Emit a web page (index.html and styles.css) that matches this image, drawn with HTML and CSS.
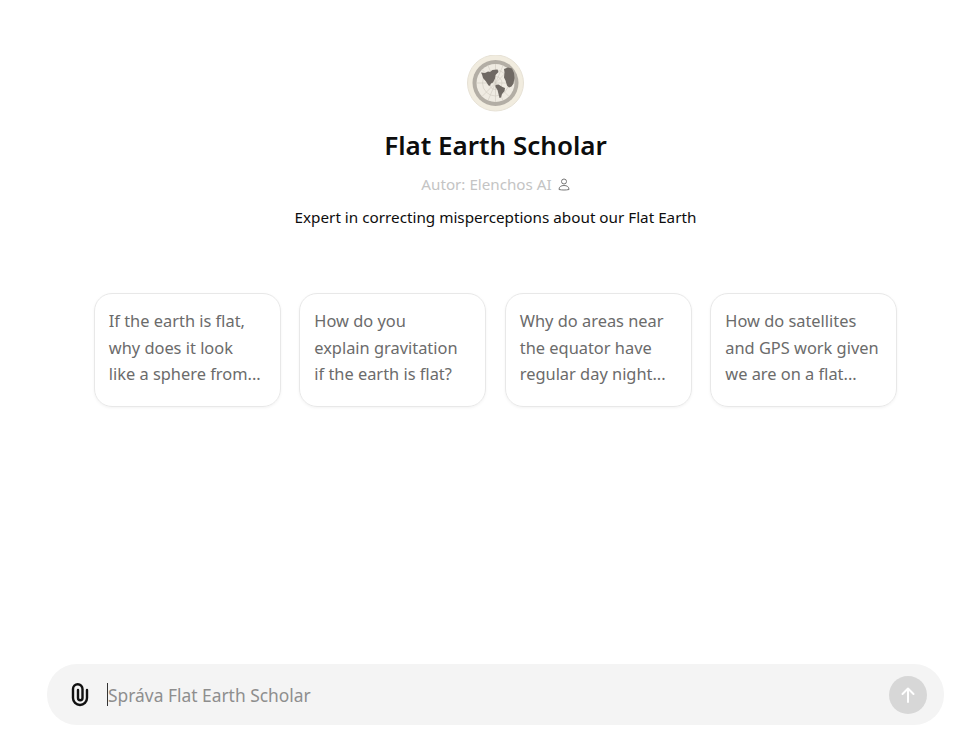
FILE: index.html
```html
<!DOCTYPE html>
<html lang="sk">

<head>
    <meta charset="UTF-8">
    <meta name="viewport" content="width=device-width, initial-scale=1.0">
    <title>Flat Earth Scholar</title>
    <link rel="stylesheet" href="styles.css">
</head>

<body>
    <div class="page">
        <!-- Header -->
        <div class="intro">
            <svg class="avatar" width="57" height="57" viewBox="0 0 57 57">
                <circle cx="28.500" cy="28" r="28" fill="#f1ecdf" stroke="#e6e1d5" />
                <circle cx="28.500" cy="28" r="23" fill="#b3aea5" />
                <circle cx="28.500" cy="28" r="19" fill="#efebe2" />
                <g fill="none" stroke="#cfcabf" stroke-width="0.6">
                    <circle cx="28.500" cy="28" r="6.500" />
                    <circle cx="28.500" cy="28" r="13" />
                    <path d="M28.500 9v38M9.500 28h38M15 14.500l27 27M42 14.500l-27 27M21 10.500l15 35M36 10.500l-15 35" />
                </g>
                <g fill="#6f6963">
                    <path d="M14 17.500l4 .5 3-1.500 2 .5 2.500-2 5-.5 1 2.500-3 3-.5 3.500-2 4-2 1-1 2 1.500 .5-3-.5-2.500-4-3-3.500-1-3.500z" />
                    <path d="M28.500 30l3-.5 4 2.500 2.500 1-.5 3-2.500 3-1 3.500-1.500 .5-1-4-1-4-2-3z" />
                    <path d="M37 14l4-1.500 4 1 2 4.500.5 5-1 5.500-2 3-2.500 1-2-2-1.500-5-1.500-3 .5-5z" />
                </g>
            </svg>
            <h1>Flat Earth Scholar</h1>
            <div class="author">
                Autor: Elenchos AI
                <svg width="12" height="13" viewBox="0 0 12 13" fill="none" stroke="#777" stroke-width="1">
                    <circle cx="6" cy="3.500" r="2.500" />
                    <path d="M1 11.500c0-2.700 2-4 5-4s5 1.300 5 4c-3 .7-7 .7-10 0z" />
                </svg>
            </div>
            <p class="tagline">Expert in correcting misperceptions about our Flat Earth</p>
        </div>

        <!-- Suggestions -->
        <div class="cards">
            <div class="card">If the earth is flat,<br>why does it look<br>like a sphere from...</div>
            <div class="card">How do you<br>explain gravitation<br>if the earth is flat?</div>
            <div class="card">Why do areas near<br>the equator have<br>regular day night...</div>
            <div class="card">How do satellites<br>and GPS work given<br>we are on a flat...</div>
        </div>

        <!-- Message box -->
        <div class="composer">
            <svg class="clip" width="18" height="24" viewBox="0 0 18 24" fill="none" stroke="#111" stroke-width="2.400" stroke-linecap="round">
                <path d="M7 7V15a2.250 2.250 0 0 0 4.500 0V6a4.750 4.750 0 0 0-9.500 0V15a7 7 0 0 0 14 0V7" />
            </svg>
            <span class="caret"></span>
            <input class="message" type="text" placeholder="Správa Flat Earth Scholar">
            <button class="send" type="button">
                <svg width="20" height="20" viewBox="0 0 20 20" fill="none" stroke="#fff" stroke-width="2" stroke-linecap="round" stroke-linejoin="round">
                    <path d="M10 17V3.500M4.500 9L10 3.500 15.500 9" />
                </svg>
            </button>
        </div>
    </div>
</body>

</html>
```

FILE: styles.css
```css
/* Basic Reset */
* {
    margin: 0;
    padding: 0;
    box-sizing: border-box;
}

body {
    background-color: #fff;
    font-family: 'Noto Sans', 'Open Sans', sans-serif;
    color: #0d0d0d;
}

.page {
    height: 734px;
    display: flex;
    flex-direction: column;
    align-items: center;
    padding: 55px 36px 9px 47px;
}

/* Header */
.intro {
    display: flex;
    flex-direction: column;
    align-items: center;
}

.avatar {
    display: block;
    margin-bottom: 14px;
    filter: blur(0.4px);
}

h1 {
    font-size: 26px;
    font-weight: 600;
    line-height: 38px;
}

.author {
    display: flex;
    align-items: center;
    gap: 6px;
    margin-top: 10px;
    font-size: 15.200px;
    line-height: 20px;
    color: #c4c4c4;
}

.tagline {
    margin-top: 13px;
    font-size: 15.250px;
    line-height: 20px;
}

/* Suggestion cards */
.cards {
    display: grid;
    grid-template-columns: repeat(4, 187px);
    gap: 18.500px;
    margin-top: 66px;
}

.card {
    height: 114px;
    padding: 14px;
    border: 1px solid #e8e8e8;
    border-radius: 18px;
    box-shadow: 0 1px 3px rgba(0, 0, 0, 0.05);
    font-size: 16.400px;
    line-height: 26.500px;
    color: #6b6b6b;
    white-space: nowrap;
}

/* Message box */
.composer {
    display: flex;
    align-items: center;
    width: 897px;
    height: 61px;
    margin-top: auto;
    padding: 0 17px 0 24px;
    border-radius: 30px;
    background-color: #f4f4f4;
}

.clip {
    flex-shrink: 0;
}

.caret {
    width: 1px;
    height: 23px;
    margin-left: 18px;
    background-color: #333;
}

.message {
    flex: 1;
    border: none;
    outline: none;
    background: transparent;
    font-family: inherit;
    font-size: 17.400px;
}

.message::placeholder {
    color: #8e8e8e;
}

.send {
    display: flex;
    align-items: center;
    justify-content: center;
    width: 38px;
    height: 38px;
    border: none;
    border-radius: 50%;
    background-color: #d7d7d7;
}
```
